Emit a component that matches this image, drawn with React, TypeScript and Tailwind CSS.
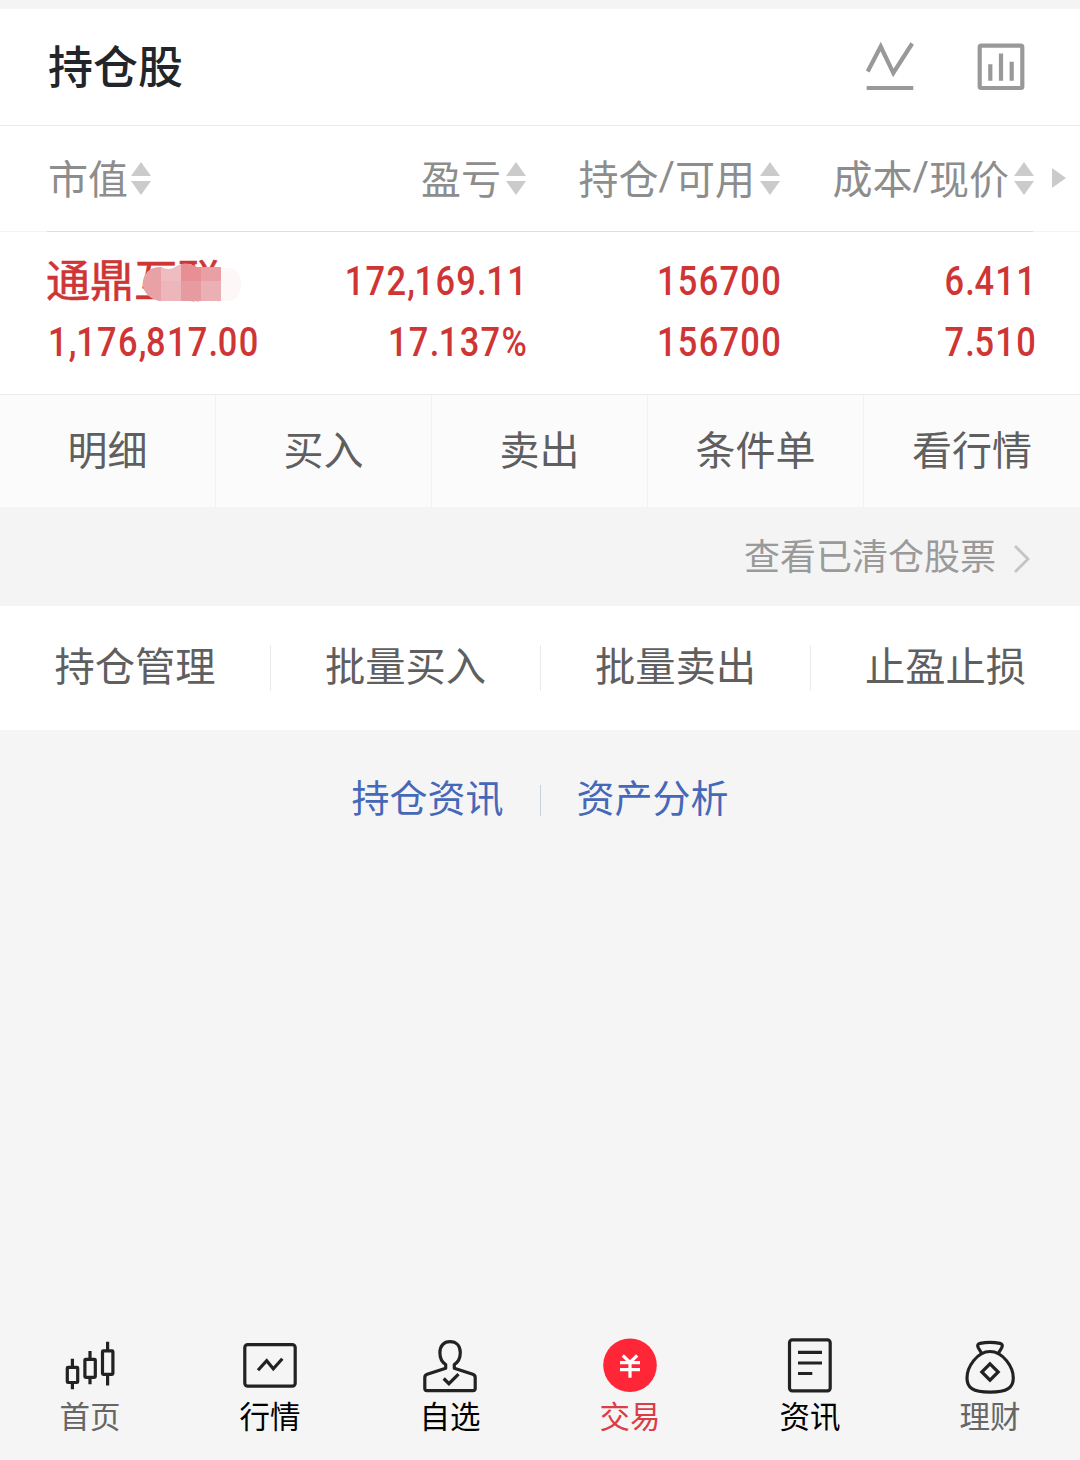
import type { ReactNode } from 'react';

interface Column {
  label: string[];
  values: string[];
}

interface Tab {
  label: string;
  color: string;
  icon: ReactNode;
}

const columns: Column[] = [
  { label: ['盈亏'], values: ['172,169.11', '17.137%'] },
  { label: ['持仓', '可用'], values: ['156700', '156700'] },
  { label: ['成本', '现价'], values: ['6.411', '7.510'] },
];

const rowActions = ['明细', '买入', '卖出', '条件单', '看行情'];
const batchActions = ['持仓管理', '批量买入', '批量卖出', '止盈止损'];

const tabs: Tab[] = [
  {
    label: '首页',
    color: 'text-[#666]',
    icon: (
      <>
        <rect x="7.3" y="32.3" width="10.4" height="15.2" rx="0.8" />
        <path d="M12.4 23.8V32M12.4 48v6.2" />
        <rect x="24.9" y="24.3" width="10.4" height="18.1" rx="0.8" />
        <path d="M30 16v8M30 43v6.3" />
        <rect x="42.5" y="15.9" width="10.4" height="23.5" rx="0.8" />
        <path d="M47.6 6.7V16M47.6 40v10.6" />
      </>
    ),
  },
  {
    label: '行情',
    color: 'text-black',
    icon: (
      <>
        <rect x="4.8" y="9.6" width="50.4" height="41.6" rx="3" />
        <path d="M18 35.3l8.7-9.6 6.6 8 9-10" />
      </>
    ),
  },
  {
    label: '自选',
    color: 'text-black',
    icon: (
      <>
        <path
          strokeLinejoin="round"
          d="M25.7 29.5C21.5 27 19.9 22 19.9 17.5C19.9 10.8 23.8 6.6 30 6.6S40.3 10.8 40.3 17.5C40.3 22 38.5 27 34.3 29.5V33.2L52.8 39.3Q55.2 40.1 55.2 42.5V53.5Q55.2 55.6 53 55.6H7Q4.8 55.6 4.8 53.5V42.5Q4.8 40.1 7.2 39.3L25.7 33.2Z"
        />
        <path d="M23.7 43.5l5.2 5.2 9.6-9.6" />
      </>
    ),
  },
  {
    label: '交易',
    color: 'text-[#dc3b48]',
    icon: (
      <>
        <circle cx="30" cy="30.2" r="26.8" fill="#ff2638" stroke="none" />
        <path stroke="#fff" d="M22.8 20.5l7.2 6.8 7.2-6.8M20 27.6h20M20 34.7h20M30 27v15.7" />
      </>
    ),
  },
  {
    label: '资讯',
    color: 'text-black',
    icon: (
      <>
        <rect x="9.5" y="4.9" width="40.7" height="51" rx="2.8" />
        <path d="M18 17.4h24M18 28h24M18 38.5h14.3" />
      </>
    ),
  },
  {
    label: '理财',
    color: 'text-[#666]',
    icon: (
      <>
        <path d="M30 16.5C17 16.5 7 32 7 43C7 52.5 12.5 57.2 30 57.2S53.3 52.5 53.3 43C53.3 32 43 16.5 30 16.5Z" />
        <path d="M22 18.8L18.3 12.8Q16.5 9.2 20 8.4Q30 6.2 40 8.4Q43.5 9.2 41.7 12.8L38 18.8" />
        <path d="M30 28.8l8.2 8.2-8.2 8.2-8.2-8.2Z" />
      </>
    ),
  },
];

function SortArrows() {
  return (
    <svg className="shrink-0" width="20" height="33" viewBox="0 0 20 33" fill="#cbcbcb">
      <path d="M10 0l10 14H0zM0 19h20L10 33z" />
    </svg>
  );
}

// separators sit tighter than the digits
function Figure({ value }: { value: string }) {
  return (
    <div className="whitespace-nowrap">
      {value.split(/([,.])/).map((part, i) => (
        <span key={i} className={i % 2 ? 'tracking-[-0.4px]' : 'tracking-[1.5px]'}>
          {part}
        </span>
      ))}
    </div>
  );
}

// pixelated patch that hides the end of the stock name
function Mosaic() {
  return (
    <svg className="absolute left-[95px] top-[5px]" width="102" height="46" viewBox="0 0 102 46">
      <defs>
        <clipPath id="patch">
          <path d="M1.5 24Q3 7 20 7Q28 11 34 7Q44 0 56 7H80V41H18Q3 37 1.5 24Z" />
        </clipPath>
      </defs>
      <path d="M78 8h12q10 2 10 16t-10 17H78z" fill="#fdf8f7" />
      <g clipPath="url(#patch)">
        <rect width="20" height="46" fill="#e8a2a6" />
        <rect x="20" width="20" height="21" fill="#efbdc0" />
        <rect x="20" y="21" width="20" height="25" fill="#edb6ba" />
        <rect x="40" width="20" height="21" fill="#e78f93" />
        <rect x="40" y="21" width="20" height="25" fill="#e59ba0" />
        <rect x="60" width="20" height="21" fill="#e8a0a4" />
        <rect x="60" y="21" width="20" height="25" fill="#eab0b4" />
      </g>
    </svg>
  );
}

export default function App() {
  return (
    <div className="flex h-[1460px] w-[1080px] flex-col overflow-hidden bg-[#f5f5f5] font-['Noto_Sans_CJK_SC',sans-serif] leading-none">
      <div className="h-[9px] bg-[#f4f4f4]" />
      <header className="flex h-[117px] items-center justify-between border-b border-[#ebebeb] bg-white pl-12 pr-[53px]">
        <h1 className="relative -top-[3px] text-[45px] font-medium text-[#22252a]">持仓股</h1>
        <div className="flex items-center gap-[59px]">
          <svg width="52" height="52" viewBox="864 41 52 52" fill="none" stroke="#999" strokeWidth="4.2">
            <path d="M867.7 71.5L880.7 46.5L893.3 73L912.2 43.5M866.7 88h46.6" />
          </svg>
          <svg width="52" height="52" viewBox="975 41 52 52" fill="none" stroke="#999" strokeWidth="4.2">
            <rect x="979.7" y="45.7" width="42.6" height="42.3" rx="1.5" />
            <path d="M990.3 64.2v16.5M1001 53.5v27.2M1011.7 61.7v19" />
          </svg>
        </div>
      </header>

      <section className="bg-white">
        <div className="flex h-[105px] items-center pl-12 text-[40px] text-[#8d8d8d]">
          <div className="flex w-[224px] items-center gap-[3px]">
            <span className="relative -top-[2px]">市值</span>
            <SortArrows />
          </div>
          {columns.map((c) => (
            <div key={c.label[0]} className="flex w-[254px] items-center justify-end gap-[5px] whitespace-nowrap">
              <div className="relative -top-[2px] flex h-10">
                {c.label.map((part, i) => (
                  <div key={part} className="flex">
                    {i > 0 && <div className="font-[Roboto]">/</div>}
                    <div>{part}</div>
                  </div>
                ))}
              </div>
              <SortArrows />
            </div>
          ))}
          <svg className="relative -top-px ml-[18px]" width="14" height="20" viewBox="0 0 14 20" fill="#cbcbcb">
            <path d="M0 0l14 10L0 20z" />
          </svg>
        </div>
        <div className="flex h-px bg-[#f3f3f3] pl-[47px]">
          <div className="w-[986px] bg-[#dedede]" />
        </div>

        <div className="flex h-[162px] pl-12 pt-[19px] text-[#cf3535]">
          <div className="w-[224px]">
            <div className="relative -left-[2px] h-[61px] whitespace-nowrap pt-[5px] text-[44px] [-webkit-text-stroke:0.6px_#cf3535]">
              通鼎互联
              <div className="absolute left-0 top-[4px]">
                <Mosaic />
              </div>
            </div>
            <div className="h-[61px] origin-left scale-x-[0.86] font-[Roboto] text-[40px] font-medium leading-[61px]">
              <Figure value="1,176,817.00" />
            </div>
          </div>
          {columns.map((c) => (
            <div
              key={c.label[0]}
              className="relative left-[2px] w-[254px] origin-right scale-x-[0.86] text-right font-[Roboto] text-[40px] font-medium leading-[61px] last:left-[3px]"
            >
              {c.values.map((v, i) => (
                <Figure key={i} value={v} />
              ))}
            </div>
          ))}
        </div>

        <div className="grid h-[113px] grid-cols-5 border-t border-[#ececec] bg-[#fbfbfb]">
          {rowActions.map((a) => (
            <button
              key={a}
              className="border-r border-[#f2f2f2] pb-[6px] text-[40px] leading-none text-[#5f5f5f] last:border-r-0"
            >
              {a}
            </button>
          ))}
        </div>
      </section>

      <div className="flex h-[99px] items-center justify-end bg-[#f4f4f4] pr-[50px] text-[36px] text-[#9a9a9a]">
        <span className="relative -top-[3px]">查看已清仓股票</span>
        <svg className="relative top-[2px] ml-[16px]" width="18" height="30" viewBox="0 0 18 30" fill="none" stroke="#c4c4c4" strokeWidth="2.8">
          <path d="M3 2l13 13L3 28" />
        </svg>
      </div>

      <section className="grid h-[124px] grid-cols-4 items-center bg-white text-[40.3px] text-[#5f5f5f]">
        {batchActions.map((a) => (
          <button
            key={a}
            className="flex h-[46px] items-center justify-center border-l border-[#ebebeb] leading-none first:border-l-0"
          >
            <span className="relative -top-[4px]">{a}</span>
          </button>
        ))}
      </section>

      <div className="mt-[50px] flex items-center justify-center gap-9 text-[38px] text-[#4668b8]">
        <a className="relative -top-[3px]">持仓资讯</a>
        <div className="relative top-px h-[31px] w-px bg-[#c9d0de]" />
        <a className="relative -top-[3px]">资产分析</a>
      </div>

      <nav className="mt-auto grid h-[125px] grid-cols-6">
        {tabs.map((t) => (
          <div key={t.label} className="flex flex-col items-center">
            <svg width="60" height="60" viewBox="0 0 60 60" fill="none" stroke="#222" strokeWidth="3.2">
              {t.icon}
            </svg>
            <span className={`mt-[5px] text-[30.5px] ${t.color}`}>{t.label}</span>
          </div>
        ))}
      </nav>
    </div>
  );
}
